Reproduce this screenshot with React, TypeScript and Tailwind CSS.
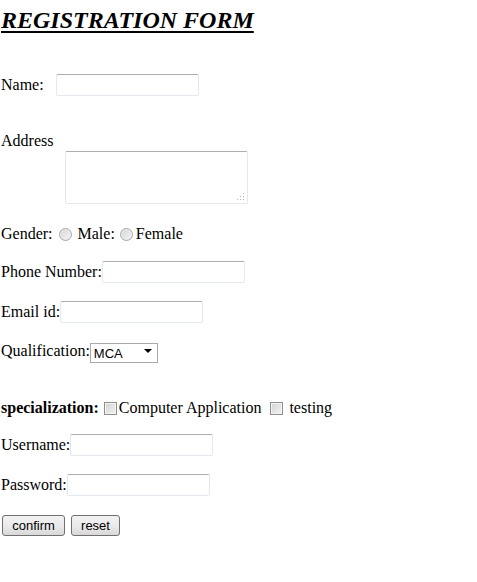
import React from 'react';

function TextBox({ className = '' }: { className?: string }) {
    return (
        <input
            type="text"
            className={`h-[22px] w-[143px] shrink-0 rounded-[2px] border border-[#e3e9ef] border-t-[#abadb3] bg-white outline-none ${className}`}
        />
    );
}

function Radio({ className = '' }: { className?: string }) {
    return (
        <span className={`inline-block h-[13px] w-[13px] shrink-0 rounded-full border border-[#a7a7a7] bg-gradient-to-br from-[#d4d4d4] to-[#f7f7f7] shadow-[inset_0_0_0_1px_#ececec] ${className}`} />
    );
}

function Check({ className = '' }: { className?: string }) {
    return (
        <span className={`inline-block h-[13px] w-[13px] shrink-0 border border-[#8f8f8f] bg-gradient-to-br from-[#d2d2d2] to-[#f4f4f4] shadow-[inset_0_0_0_1px_#f4f4f4] ${className}`} />
    );
}

export default function App(): JSX.Element {
    return (
        <div className="min-h-screen bg-white pl-[1px] text-[16px] text-black" style={{ fontFamily: '"Liberation Serif", "Times New Roman", serif' }}>
            <h2 className="mt-[6px] h-[28px] text-[24px] leading-[28px] font-bold italic underline decoration-2 underline-offset-[3px]">
                REGISTRATION FORM
            </h2>

            <div className="mt-[40px] flex h-[22px] items-center">
                <span>Name:</span>
                <TextBox className="ml-[12px]" />
            </div>

            <div className="mt-[36px] h-[18px] leading-[18px]">Address</div>
            <div className="relative mt-[1px] ml-[64px] h-[53px] w-[183px]">
                <textarea className="h-full w-full resize-none rounded-[2px] border border-[#e3e9ef] border-t-[#abadb3] bg-white outline-none" />
                <svg className="absolute right-[3px] bottom-[3px]" width="8" height="8" viewBox="0 0 8 8">
                    <rect x="6" y="0" width="1" height="1" fill="#b8b8b8" />
                    <rect x="3" y="3" width="1" height="1" fill="#b8b8b8" />
                    <rect x="6" y="3" width="1" height="1" fill="#b8b8b8" />
                    <rect x="0" y="6" width="1" height="1" fill="#b8b8b8" />
                    <rect x="3" y="6" width="1" height="1" fill="#b8b8b8" />
                    <rect x="6" y="6" width="1" height="1" fill="#b8b8b8" />
                </svg>
            </div>

            <div className="mt-[21px] flex h-[18px] items-center leading-[18px]">
                <span>Gender:</span>
                <Radio className="ml-[6px]" />
                <span className="ml-[6px]">Male:</span>
                <Radio className="ml-[5px]" />
                <span className="ml-[3px]">Female</span>
            </div>

            <div className="mt-[18px] flex h-[22px] items-center">
                <span>Phone Number:</span>
                <TextBox />
            </div>

            <div className="mt-[18px] flex h-[22px] items-center">
                <span>Email id:</span>
                <TextBox />
            </div>

            <div className="mt-[18px] flex h-[20px] items-center">
                <span>Qualification:</span>
                <div className="relative h-[20px] w-[68px] shrink-0">
                    <select
                        className="h-full w-full appearance-none border border-[#a9a9a9] bg-white pl-[3px] text-[13px] text-black outline-none"
                        style={{ fontFamily: '"Liberation Sans", Arial, sans-serif' }}
                        defaultValue="MCA"
                    >
                        <option>MCA</option>
                        <option>BCA</option>
                        <option>MBA</option>
                    </select>
                    <svg className="pointer-events-none absolute top-[8px] right-[6px]" width="8" height="4" viewBox="0 0 8 4">
                        <path d="M0 0 H8 L4 4 Z" fill="#000" />
                    </svg>
                </div>
            </div>

            <div className="mt-[38px] flex h-[18px] items-center leading-[18px]">
                <span className="font-bold">specialization:</span>
                <Check className="ml-[5px]" />
                <span className="ml-[2px]">Computer Application</span>
                <Check className="ml-[9px]" />
                <span className="ml-[6px]">testing</span>
            </div>

            <div className="mt-[17px] flex h-[22px] items-center">
                <span>Username:</span>
                <TextBox />
            </div>

            <div className="mt-[18px] flex h-[22px] items-center">
                <span>Password:</span>
                <TextBox />
            </div>

            <div className="mt-[19px] ml-[1px] flex gap-[6px]" style={{ fontFamily: '"Liberation Sans", Arial, sans-serif' }}>
                <button type="submit" className="h-[21px] w-[63px] rounded-[3px] border border-[#707070] bg-gradient-to-b from-[#f2f2f2] via-[#ebebeb] to-[#d8d8d8] text-[13px] leading-none text-black">
                    confirm
                </button>
                <button type="reset" className="h-[21px] w-[49px] rounded-[3px] border border-[#707070] bg-gradient-to-b from-[#f2f2f2] via-[#ebebeb] to-[#d8d8d8] text-[13px] leading-none text-black">
                    reset
                </button>
            </div>
        </div>
    );
}
